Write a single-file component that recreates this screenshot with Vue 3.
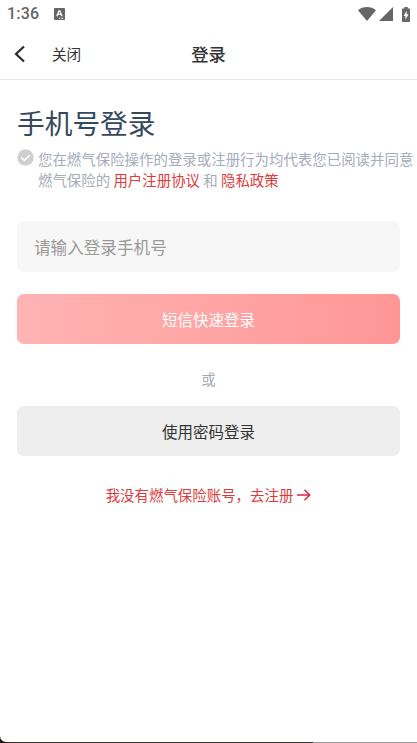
<script setup>
const title = '登录'
</script>

<template>
  <div class="screen">
    <header class="status">
      <span class="time">1:36</span>
      <svg class="badge" width="11" height="12" viewBox="0 0 11 12">
        <rect width="11" height="12" rx="1" fill="#666" />
        <path d="M2.8 8.2 5 2.8h.8L8 8.2M3.8 6.3h3.1" fill="none" stroke="#fff" stroke-width="1.3" />
        <path d="M5 10.3h1.2M7.4 10.3h1.8" stroke="#fff" stroke-width="1" />
      </svg>
      <div class="indicators">
        <svg width="18" height="14" viewBox="0 0 18 14">
          <path d="M0 3.2C2.6 1 5.700 0 9 0s6.400 1 9 3.200L9 14z" fill="#666" />
        </svg>
        <svg width="14" height="14" viewBox="0 0 14 14">
          <path d="M14 0v14H0z" fill="#666" />
        </svg>
        <svg class="battery" width="8" height="15" viewBox="0 0 8 15">
          <path d="M2.300 0h3.400v1.500H7.200q.8 0 .8.8v11.900q0 .8-.8.8H.8q-.8 0-.8-.8V2.300q0-.8.8-.8h1.500z" fill="#666" />
          <path d="M4.700 3.800v3.500h1.800L3.400 12.700V9H1.600z" fill="#fff" />
        </svg>
      </div>
    </header>

    <nav class="navbar">
      <svg class="back" width="12" height="18" viewBox="0 0 12 18">
        <path d="M10 1.500 2 9l8 7.500" fill="none" stroke="#29293a" stroke-width="2.200" />
      </svg>
      <span class="close">关闭</span>
      <h1 class="title">{{ title }}</h1>
    </nav>

    <main class="content">
      <h2 class="heading">手机号登录</h2>
      <div class="terms">
        <svg class="check" width="17" height="17" viewBox="0 0 17 17">
          <circle cx="8.500" cy="8.500" r="8.200" fill="#cfcfcf" />
          <path d="m4.200 8.500 3.100 3 5.500-5.300" fill="none" stroke="#fff" stroke-width="1.500" />
        </svg>
        <p class="agreement">
          <span>您在燃气保险操作的登录或注册行为均代表您已阅读并同意</span><br />
          <span>燃气保险的 <a>用户注册协议</a> 和 <a>隐私政策</a></span>
        </p>
      </div>
      <input class="phone" type="tel" placeholder="请输入登录手机号" />
      <button class="button primary">短信快速登录</button>
      <div class="or">或</div>
      <button class="button secondary">使用密码登录</button>
      <div class="register">
        <span>我没有燃气保险账号，去注册</span>
        <svg width="14" height="12" viewBox="0 0 14 12">
          <path d="M0 6h12.500M7.500 .8 12.700 6l-5.200 5.200" fill="none" stroke="#dc2545" stroke-width="1.500" />
        </svg>
      </div>
    </main>
    <footer class="edge">
      <svg class="corner" width="7" height="7" viewBox="0 0 7 7">
        <path d="M0 0q.5 6 7 6v1H0z" fill="#211815" />
      </svg>
    </footer>
  </div>
</template>

<style>
body {
  margin: 0;
  background: #fff;
  overflow: hidden;
}
</style>

<style scoped>
.screen {
  display: flex;
  flex-direction: column;
  height: 743px;
  background: #fff;
  font-family: "Noto Sans CJK SC", sans-serif;
}
.status {
  display: flex;
  align-items: center;
  height: 29px;
  box-sizing: border-box;
  padding: 0 7px 1px;
}
.time {
  width: 47px;
  font: 500 16px/28px Roboto, sans-serif;
  letter-spacing: 0.2px;
  color: #666;
}
.indicators {
  display: flex;
  align-items: center;
  gap: 3px;
  margin-left: auto;
}
.battery {
  margin-left: 6px;
}
.navbar {
  position: relative;
  display: flex;
  align-items: center;
  height: 51px;
  box-sizing: border-box;
  padding-left: 14px;
  border-bottom: 1px solid #e8e8e8;
}
.close {
  margin-left: 26px;
  font-size: 14.600px;
  line-height: 22px;
  color: #333;
}
.title {
  position: absolute;
  inset: 0;
  margin: 0;
  text-align: center;
  font-size: 17.300px;
  font-weight: 500;
  line-height: 50px;
  color: #333;
}
.content {
  display: flex;
  flex-direction: column;
  padding: 22px 17px 0;
}
.heading {
  margin: 0;
  font-size: 27.700px;
  font-weight: 400;
  line-height: 40px;
  color: #34495e;
}
.terms {
  display: flex;
  gap: 4px;
  height: 42px;
  margin: 6px -17px 0 0;
}
.check {
  flex: none;
  margin-top: 1px;
}
.agreement {
  margin: 0;
  font-size: 14.450px;
  line-height: 21px;
  white-space: nowrap;
  color: #a5abbb;
}
.agreement a {
  color: #e03a3a;
}
.phone {
  height: 51px;
  box-sizing: border-box;
  margin: 31px 0 0;
  padding: 0 17px;
  border: 0;
  border-radius: 7px;
  background: #f7f7f7;
  font: 16.600px "Noto Sans CJK SC", sans-serif;
  color: #333;
}
.phone::placeholder {
  color: #999;
  opacity: 1;
}
.button {
  height: 50px;
  padding: 0;
  border: 0;
  border-radius: 7px;
  font: 15.500px "Noto Sans CJK SC", sans-serif;
}
.primary {
  margin-top: 22px;
  background: linear-gradient(90deg, #ffb3b3, #ff9696);
  color: #fff;
}
.or {
  height: 22px;
  margin: 24px 0 16px;
  text-align: center;
  font-size: 14.400px;
  line-height: 22px;
  color: #a5abbb;
}
.secondary {
  background: #eee;
  color: #333;
}
.register {
  display: flex;
  justify-content: center;
  align-items: center;
  gap: 4px;
  margin-top: 28px;
  font-size: 14.450px;
  line-height: 22px;
  color: #dc3b3b;
}
.edge {
  position: relative;
  height: 1px;
  margin-top: auto;
  background: linear-gradient(90deg, #38302d 313px, #999 313px);
}
.corner {
  position: absolute;
  left: 0;
  bottom: 0;
}
</style>
